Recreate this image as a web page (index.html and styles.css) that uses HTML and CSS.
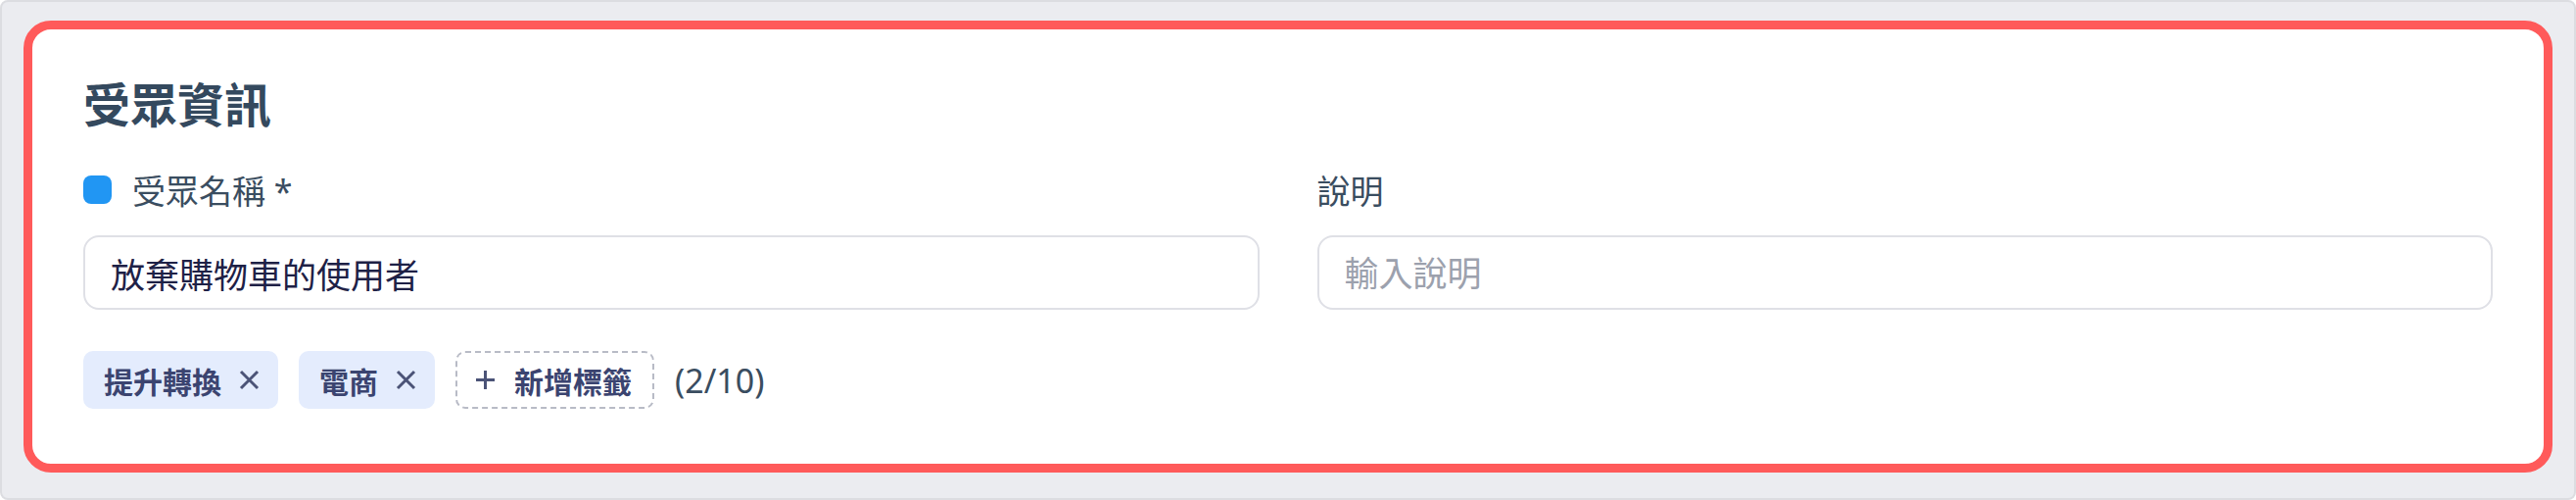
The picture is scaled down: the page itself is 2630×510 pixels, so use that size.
FILE: index.html
```html
<!DOCTYPE html>
<html lang="zh-Hant">
<head>
<meta charset="UTF-8" />
<meta name="viewport" content="width=device-width, initial-scale=1" />
<title>受眾資訊</title>
<link rel="stylesheet" href="styles.css">
</head>
<body>

<div class="frame">
  <section class="card">
    <h2 class="card-title">受眾資訊</h2>

    <div class="fields">
      <div class="field">
        <label class="field-label" for="audienceName"><span class="dot"></span>受眾名稱 *</label>
        <input class="text-input" id="audienceName" type="text" value="放棄購物車的使用者" />
      </div>
      <div class="field">
        <label class="field-label" for="audienceDesc">說明</label>
        <input class="text-input" id="audienceDesc" type="text" placeholder="輸入說明" />
      </div>
    </div>

    <div class="tags">
      <span class="tag">提升轉換
        <svg class="tag-remove" viewBox="0 0 21 21"><path d="M2 2 L19 19 M19 2 L2 19" /></svg>
      </span>
      <span class="tag">電商
        <svg class="tag-remove" viewBox="0 0 21 21"><path d="M2 2 L19 19 M19 2 L2 19" /></svg>
      </span>
      <button class="tag-add" type="button">
        <svg class="tag-plus" viewBox="0 0 21 21"><path d="M10.5 1 V20 M1 10.5 H20" /></svg>
        新增標籤
      </button>
      <span class="tag-count">(2/10)</span>
    </div>
  </section>
</div>

</body>
</html>
```

FILE: styles.css
```css
html, body {
  margin: 0;
  height: 100%;
}
body {
  font-family: "Noto Sans", "Noto Sans CJK TC", sans-serif;
  background: #fff;
}
.frame {
  box-sizing: border-box;
  height: 510px;
  display: flex;
  flex-direction: column;
  padding: 19px 22px 26px 22px;
  background: #ebecf0;
  border: 2px solid #dcdde1;
  border-radius: 8px;
}
.card {
  flex: 1;
  box-sizing: border-box;
  background: white;
  border: 9px solid #ff5a5a;
  border-radius: 28px;
  padding: 48px 52px 0 52px;
}
.card-title {
  margin: 0 0 37px 0;
  font-size: 48px;
  line-height: 58px;
  font-weight: 700;
  color: #34495e;
}
.fields {
  display: grid;
  grid-template-columns: 1fr 1fr;
  column-gap: 59px;
}
.field-label {
  display: flex;
  align-items: center;
  gap: 21px;
  height: 41px;
  margin-bottom: 26px;
  font-size: 34px;
  color: #3a4d60;
}
.dot {
  width: 29px;
  height: 29px;
  border-radius: 8px;
  background: #2196f3;
}
.text-input {
  box-sizing: border-box;
  width: 100%;
  height: 76px;
  padding: 0 26px;
  border: 2px solid #dfe0e6;
  border-radius: 16px;
  font-family: "Noto Sans", "Noto Sans CJK TC", sans-serif;
  font-size: 35px;
  color: #1e2146;
  background: white;
  outline: none;
}
.text-input::placeholder {
  color: #9ca1ad;
}
.tags {
  display: flex;
  align-items: center;
  gap: 21px;
  margin-top: 42px;
}
.tag {
  box-sizing: border-box;
  display: flex;
  align-items: center;
  gap: 18px;
  height: 59px;
  padding: 0 19px 0 21px;
  border-radius: 10px;
  background: #e4ecfd;
  font-size: 30px;
  font-weight: 600;
  color: #3b4470;
}
.tag-remove, .tag-plus {
  width: 21px;
  height: 21px;
  fill: none;
  stroke: #4b5377;
  stroke-width: 3;
}
.tag-add {
  box-sizing: border-box;
  display: flex;
  align-items: center;
  gap: 19px;
  height: 59px;
  padding: 0 21px 0 18px;
  border: 2px dashed #b8bbc6;
  border-radius: 10px;
  background: white;
  font-family: "Noto Sans", "Noto Sans CJK TC", sans-serif;
  font-size: 30px;
  font-weight: 600;
  color: #3b4470;
  cursor: pointer;
}
.tag-count {
  font-size: 34px;
  color: #3a4d60;
}
```
